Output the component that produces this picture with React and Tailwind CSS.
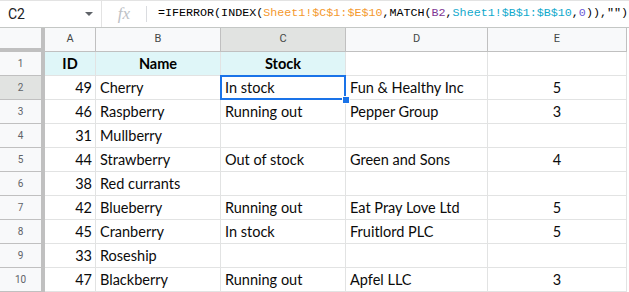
import React from 'react';

const COLS = [
  { key: 'A', width: 'w-[51px]', align: 'justify-end pr-[3px]' },
  { key: 'B', width: 'w-[125px]', align: 'justify-start pl-[4px]' },
  { key: 'C', width: 'w-[125px]', align: 'justify-start pl-[4px]' },
  { key: 'D', width: 'w-[142px]', align: 'justify-start pl-[4px]' },
  { key: 'E', width: 'w-[139px]', align: 'justify-center' },
];

const ROWS = [
  ['49', 'Cherry', 'In stock', 'Fun & Healthy Inc', '5'],
  ['46', 'Raspberry', 'Running out', 'Pepper Group', '3'],
  ['31', 'Mullberry', '', '', ''],
  ['44', 'Strawberry', 'Out of stock', 'Green and Sons', '4'],
  ['38', 'Red currants', '', '', ''],
  ['42', 'Blueberry', 'Running out', 'Eat Pray Love Ltd', '5'],
  ['45', 'Cranberry', 'In stock', 'Fruitlord PLC', '5'],
  ['33', 'Roseship', '', '', ''],
  ['47', 'Blackberry', 'Running out', 'Apfel LLC', '3'],
];

const HEADERS = ['ID', 'Name', 'Stock', '', ''];

const cellFont = { fontFamily: 'Lato, "Open Sans", sans-serif' };

export default function App() {
  return (
    <div className="w-[629px] h-[292px] bg-white overflow-hidden" style={{ fontFamily: 'Roboto, "Liberation Sans", sans-serif' }}>
      {/* Formula bar */}
      <div className="h-[28px] flex border-b border-[#c4c7c5] border-t border-t-[#e3e3e3]">
        <div className="w-[102px] flex items-center justify-between pl-[8px] pr-[8px] border-r border-[#e3e3e3]">
          <span className="text-[14px] text-[#202124]">C2</span>
          <span className="w-0 h-0 border-l-[4px] border-r-[4px] border-t-[4px] border-l-transparent border-r-transparent border-t-[#5f6368]" />
        </div>
        <div className="w-[44px] flex items-center justify-center">
          <span className="text-[17px] italic text-[#bdc1c6]" style={{ fontFamily: '"Liberation Serif", serif' }}>fx</span>
        </div>
        <div className="w-px my-[5px] bg-[#dadce0]" />
        <div className="flex-1 flex items-center pl-[11px] text-[11.7px] whitespace-nowrap text-[#000]" style={{ fontFamily: '"Liberation Mono", "DejaVu Sans Mono", monospace' }}>
          <span>=IFERROR(INDEX(</span>
          <span className="text-[#f4992d]">Sheet1!$C$1:$E$10</span>
          <span>,MATCH(</span>
          <span className="text-[#7e3794]">B2</span>
          <span>,</span>
          <span className="text-[#11a9cc]">Sheet1!$B$1:$B$10</span>
          <span>,</span>
          <span className="text-[#6b5bd6]">0</span>
          <span>)),""</span>
          <span>)</span>
        </div>
      </div>

      {/* Column headers */}
      <div className="flex h-[24px]">
        <div className="w-[45px] bg-[#f8f9fa] border-r-[4px] border-b-[4px] border-[#c0c0c0]" />
        {COLS.map((c) => (
          <div
            key={c.key}
            className={`${c.width} flex items-center justify-center text-[11px] text-[#444746] border-r border-b border-[#c0c0c0] ${c.key === 'C' ? 'bg-[#e1e3e1]' : 'bg-[#f8f9fa]'}`}
          >
            {c.key}
          </div>
        ))}
      </div>

      {/* Header data row */}
      <div className="flex h-[24px]">
        <div className="w-[45px] flex items-center justify-center text-[10px] text-[#5f6368] bg-[#f8f9fa] border-r-[4px] border-b border-[#c0c0c0]">1</div>
        {COLS.map((c, i) => (
          <div
            key={c.key}
            className={`${c.width} flex items-center justify-center text-[14.5px] font-bold text-black border-r border-b border-[#e2e3e3] ${i < 3 ? 'bg-[#dff6f8]' : 'bg-white'}`}
            style={cellFont}
          >
            {HEADERS[i]}
          </div>
        ))}
      </div>

      {ROWS.map((row, r) => (
        <div key={r} className="flex h-[24px]">
          <div
            className={`w-[45px] flex items-center justify-center text-[10px] text-[#5f6368] border-r-[4px] border-b border-[#c0c0c0] ${r === 0 ? 'bg-[#e1e3e1]' : 'bg-[#f8f9fa]'}`}
          >
            {r + 2}
          </div>
          {COLS.map((c, i) => (
            <div
              key={c.key}
              className={`${c.width} relative flex items-center ${c.align} text-[14.5px] text-[#0b0b0b] border-r border-b border-[#e2e3e3] whitespace-nowrap ${r === 0 && c.key === 'C' ? 'z-10' : ''}`}
              style={cellFont}
            >
              {row[i]}
              {r === 0 && c.key === 'C' && (
                <>
                  <div className="absolute left-[-1px] top-[-1px] right-[-1px] bottom-[-1px] border-2 border-[#1a73e8]" />
                  <div className="absolute right-[-5px] bottom-[-5px] w-[8px] h-[8px] bg-[#1a73e8] border border-white" />
                </>
              )}
            </div>
          ))}
        </div>
      ))}
    </div>
  );
}
